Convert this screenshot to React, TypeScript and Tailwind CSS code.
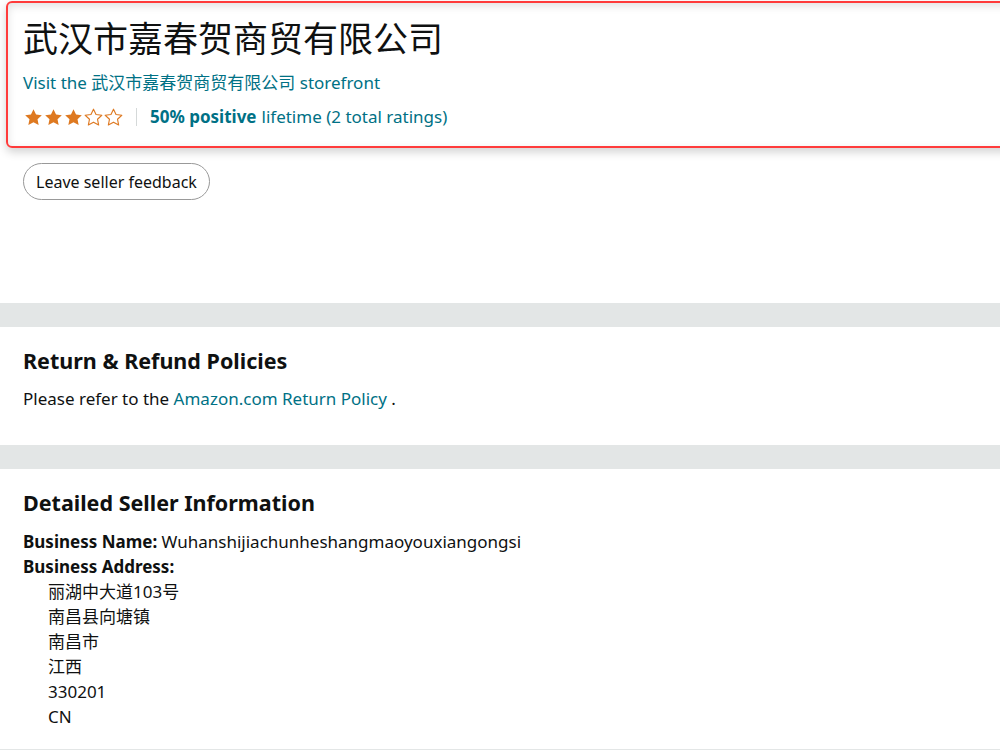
import React from "react";

const font = { fontFamily: '"Noto Sans", "Noto Sans CJK SC", sans-serif' };

function Star({ filled }: { filled: boolean }) {
  return (
    <svg width="21" height="21" viewBox="0 0 24 24" className="-mr-[1px]">
      <path
        d="M12 2.5l2.9 6.1 6.6.8-4.9 4.6 1.3 6.6L12 17.3l-5.9 3.3 1.3-6.6-4.9-4.6 6.6-.8z"
        fill={filled ? "#de7921" : "none"}
        stroke="#de7921"
        strokeWidth={filled ? 0 : 1.3}
        strokeLinejoin="round"
      />
    </svg>
  );
}

function Band() {
  return <div className="h-[24px] bg-[#e3e6e6]" />;
}

export default function App() {
  return (
    <div className="h-[750px] w-[1000px] overflow-hidden bg-white text-[#0f1111]" style={font}>
      <div className="pl-[6px] pt-[1px]">
        <div className="-mr-4 rounded-[6px] border-2 border-[#ff3b3b] px-[15px] pb-[17px] pt-[12px] shadow-[0_4px_10px_rgba(0,0,0,0.18),inset_0_3px_8px_rgba(0,0,0,0.12)]">
          <h1 className="text-[35px] leading-[48px] font-normal">武汉市嘉春贺商贸有限公司</h1>
          <div className="mt-[8px] text-[17px] leading-[24px] text-[#007185]">Visit the 武汉市嘉春贺商贸有限公司 storefront</div>
          <div className="mt-[10px] flex items-center text-[17px] leading-[24px] text-[#007185]">
            <Star filled />
            <Star filled />
            <Star filled />
            <Star filled={false} />
            <Star filled={false} />
            <span className="ml-[13px] mr-[13px] h-[18px] w-px bg-[#d5d9d9]" />
            <span className="font-bold">50% positive</span>
            <span className="ml-[5px]">lifetime (2 total ratings)</span>
          </div>
        </div>
      </div>

      <div className="px-[23px] pt-[15px]">
        <button className="h-[37px] rounded-full border border-[#999] px-[12px] text-[16px] text-[#0f1111]">Leave seller feedback</button>
      </div>

      <div className="mt-[103px]">
        <Band />
        <div className="px-[23px] pb-[34px] pt-[18px]">
          <h2 className="text-[21.5px] font-bold leading-[32px]">Return &amp; Refund Policies</h2>
          <p className="mt-[9px] text-[17px] leading-[25px]">
            Please refer to the <span className="text-[#007185]">Amazon.com Return Policy</span> .
          </p>
        </div>
        <Band />
        <div className="px-[23px] pb-[20px] pt-[18px] text-[17px] leading-[25px]">
          <h2 className="text-[21.5px] font-bold leading-[32px]">Detailed Seller Information</h2>
          <div className="mt-[10px]">
            <span className="font-bold">Business Name:</span> Wuhanshijiachunheshangmaoyouxiangongsi
          </div>
          <div className="font-bold">Business Address:</div>
          <div className="pl-[25px]">
            <div>丽湖中大道103号</div>
            <div>南昌县向塘镇</div>
            <div>南昌市</div>
            <div>江西</div>
            <div>330201</div>
            <div>CN</div>
          </div>
        </div>
        <Band />
      </div>
    </div>
  );
}
